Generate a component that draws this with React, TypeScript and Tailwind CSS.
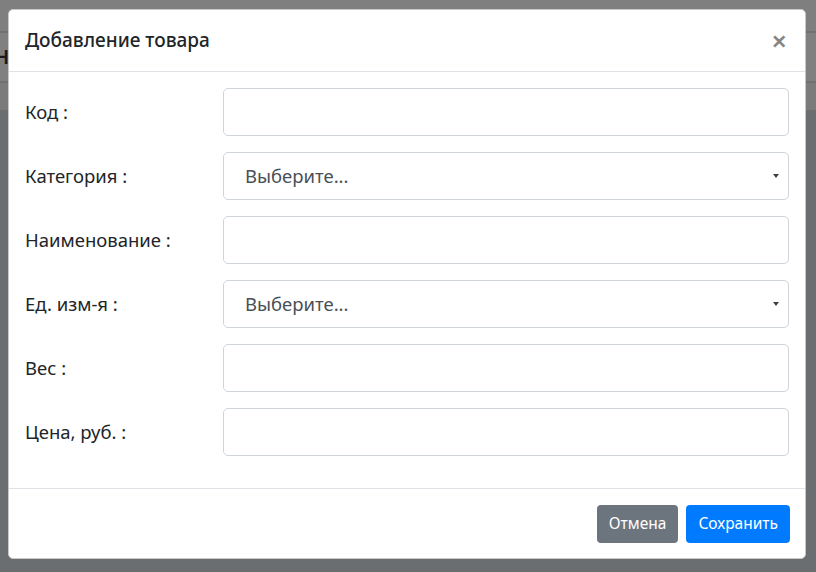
import React from 'react';

const fields = [
  { label: 'Код :', type: 'input' },
  { label: 'Категория :', type: 'select' },
  { label: 'Наименование :', type: 'input' },
  { label: 'Ед. изм-я :', type: 'select' },
  { label: 'Вес :', type: 'input' },
  { label: 'Цена, руб. :', type: 'input' },
];

function SelectBox() {
  return (
    <div className="flex-1 h-12 border border-[#ced4da] rounded-[5px] bg-white flex items-center justify-between pl-[21px] pr-[9px]">
      <span className="text-[18.5px] text-[#495057]">Выберите...</span>
      <svg width="6" height="4" viewBox="0 0 6 4">
        <path d="M0 0 L6 0 L3 4 Z" fill="#3c4046" />
      </svg>
    </div>
  );
}

export default function App() {
  return (
    <div className="relative w-[816px] h-[572px] overflow-hidden bg-[#6b6e71] font-['Noto_Sans',sans-serif]">
      {/* page behind the backdrop */}
      <div className="flex flex-col">
        <div className="h-[33px] bg-[#7f7f7f] border-b-2 border-[#707070]" />
        <div className="h-[50px] bg-[#808080] border-b-2 border-[#707070] flex items-center pl-[1px]">
          <span className="text-[20px] font-semibold text-[#1a1a1a] -ml-[7px]">Н</span>
        </div>
        <div className="h-[27px] bg-[#7b7b7b]" />
      </div>

      {/* modal */}
      <div className="absolute left-[8px] top-[9px] w-[798px] bg-white border border-[#c8c8c8] rounded-[5px] text-[#212529]">
        <div className="flex items-center justify-between pl-4 pr-[18px] pt-[15px] pb-4 border-b border-[#dee2e6]">
          <h5 className="text-[19px] leading-[30px] font-medium">Добавление товара</h5>
          <span className="text-[27px] leading-none font-semibold text-[#858585]">×</span>
        </div>

        <div className="px-4 pt-4 pb-8 flex flex-col gap-4">
          {fields.map((f) => (
            <div key={f.label} className="flex items-center">
              <label className="w-[198px] text-[18.5px]">{f.label}</label>
              {f.type === 'select' ? (
                <SelectBox />
              ) : (
                <div className="flex-1 h-12 border border-[#ced4da] rounded-[5px] bg-white" />
              )}
            </div>
          ))}
        </div>

        <div className="flex justify-end items-center gap-2 pl-4 pr-[15px] pt-4 pb-[15px] border-t border-[#dee2e6]">
          <button className="h-[38px] px-3 rounded-[4px] bg-[#6c757d] text-white text-[15.5px]">Отмена</button>
          <button className="h-[38px] px-3 rounded-[4px] bg-[#007bff] text-white text-[15.5px]">Сохранить</button>
        </div>
      </div>
    </div>
  );
}
